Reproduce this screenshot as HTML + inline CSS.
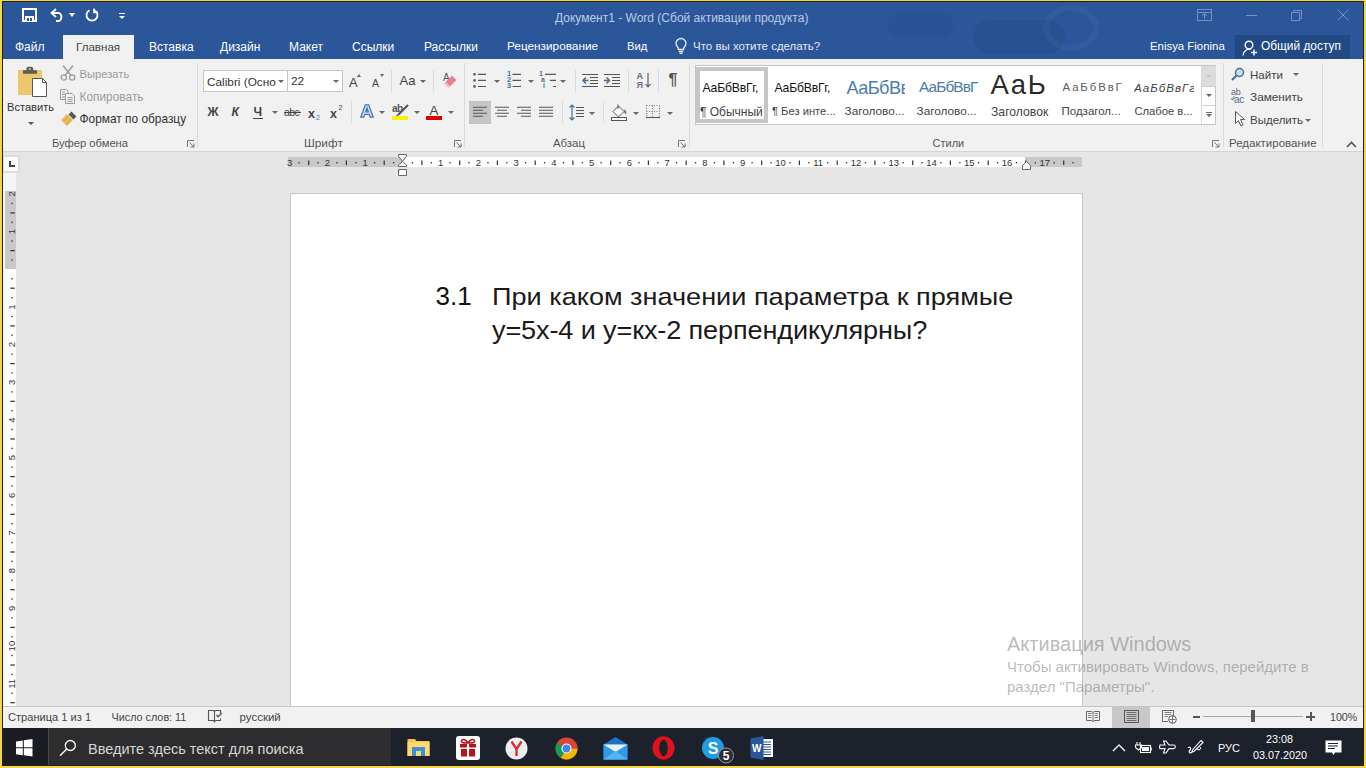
<!DOCTYPE html>
<html><head><meta charset="utf-8">
<style>
*{margin:0;padding:0;box-sizing:border-box}
html,body{width:1366px;height:768px;overflow:hidden;background:#f2d64a;font-family:"Liberation Sans",sans-serif}
.a{position:absolute}
.t{position:absolute;white-space:nowrap;line-height:1;font-size:11.5px;color:#444}
.tab{position:absolute;white-space:nowrap;line-height:1;font-size:12px;color:#fff;top:41px}
.vs{position:absolute;width:1px;background:#dadada}
.dd{position:absolute;width:0;height:0;border-left:3px solid transparent;border-right:3px solid transparent;border-top:3px solid #666}
svg{position:absolute;overflow:visible}
</style></head><body>
<!-- frame -->
<div class="a" style="left:2px;top:1px;width:1362px;height:765px;background:#222"></div>
<!-- title bar -->
<div class="a" style="left:3px;top:2px;width:1360px;height:57px;background:#2b579a;overflow:hidden">
<div class="a" style="left:970px;top:18px;width:92px;height:34px;border-radius:17px;background:rgba(20,45,95,0.13)"></div>
<div class="a" style="left:885px;top:10px;width:66px;height:26px;border-radius:13px;background:rgba(20,45,95,0.07)"></div>
<div class="a" style="left:1040px;top:3px;width:56px;height:46px;border-radius:50%;border:6px solid rgba(255,255,255,0.03)"></div>
</div>
<!-- QAT icons -->
<svg style="left:22px;top:8px" width="15" height="14" viewBox="0 0 15 14"><path d="M1 1H14V13H1Z" fill="none" stroke="#fff" stroke-width="2"/><rect x="3" y="8" width="9" height="5" fill="#fff"/><rect x="5" y="10" width="2" height="3" fill="#2b579a"/><rect x="8" y="10" width="2" height="3" fill="#2b579a"/></svg>
<svg style="left:50px;top:8px" width="15" height="14" viewBox="0 0 15 14"><path d="M2 5H9A4.5 4.5 0 0 1 9 13H6" fill="none" stroke="#fff" stroke-width="1.8"/><path d="M6 1L1.5 5L6 9" fill="none" stroke="#fff" stroke-width="1.8"/></svg>
<div class="dd" style="left:69px;top:13px;border-top-color:#fff;border-width:4px 3.5px 0 3.5px"></div>
<svg style="left:85px;top:8px" width="14" height="14" viewBox="0 0 14 14"><path d="M9.5 2.2A5.5 5.5 0 1 1 4.5 2.2" fill="none" stroke="#fff" stroke-width="1.8"/><path d="M9 0.5V4.5H13" fill="none" stroke="#fff" stroke-width="1.6"/></svg>
<div class="a" style="left:119px;top:13px;width:6px;height:1px;background:#fff"></div>
<div class="dd" style="left:119px;top:16px;border-top-color:#fff;border-width:3px 3px 0 3px"></div>
<div class="t" style="left:555px;top:11.8px;font-size:12px;color:#bdcbe3">Документ1 - Word (Сбой активации продукта)</div>
<!-- window buttons -->
<svg style="left:1197px;top:9px" width="16" height="13" viewBox="0 0 16 13"><rect x="0.5" y="0.5" width="14" height="11" fill="none" stroke="#7593c2"/><path d="M0.5 3.5H14.5M7.5 10V5M5 7L7.5 4.5L10 7" fill="none" stroke="#7593c2"/></svg>
<div class="a" style="left:1246px;top:15px;width:11px;height:1px;background:#7593c2"></div>
<svg style="left:1291px;top:10px" width="11" height="11" viewBox="0 0 11 11"><path d="M0.5 2.5H8.5V10.5H0.5ZM2.5 2.5V0.5H10.5V8.5H8.5" fill="none" stroke="#7593c2"/></svg>
<svg style="left:1337px;top:9px" width="12" height="12" viewBox="0 0 12 12"><path d="M0.5 0.5L11.5 11.5M11.5 0.5L0.5 11.5" stroke="#7593c2" stroke-width="1"/></svg>
<!-- tabs -->
<div class="tab" style="left:15px">Файл</div>
<div class="a" style="left:63px;top:35px;width:71px;height:24px;background:#f1f1f1"></div>
<div class="tab" style="left:76px;color:#444;font-size:11.6px">Главная</div>
<div class="tab" style="left:149px">Вставка</div>
<div class="tab" style="left:220px">Дизайн</div>
<div class="tab" style="left:289px">Макет</div>
<div class="tab" style="left:352px">Ссылки</div>
<div class="tab" style="left:424px">Рассылки</div>
<div class="tab" style="left:507px;font-size:11.8px">Рецензирование</div>
<div class="tab" style="left:627px;font-size:11.2px">Вид</div>
<svg style="left:675px;top:39px" width="12" height="15" viewBox="0 0 12 15"><path d="M3.5 10.5C3.5 8 1 7 1 4.5A5 5 0 0 1 11 4.5C11 7 8.5 8 8.5 10.5Z" fill="none" stroke="#e6ecf5" stroke-width="1.3"/><path d="M3.8 12.5H8.2M4.5 14.3H7.5" stroke="#e6ecf5" stroke-width="1.3"/></svg>
<div class="tab" style="left:693px;font-size:11.5px;color:#e3e9f3">Что вы хотите сделать?</div>
<div class="tab" style="left:1150px;font-size:11.4px">Enisya Fionina</div>
<div class="a" style="left:1235px;top:35px;width:115px;height:24px;background:#214a85"></div>
<svg style="left:1242px;top:40px" width="16" height="16" viewBox="0 0 16 16"><circle cx="7" cy="5" r="3.8" fill="none" stroke="#fff" stroke-width="1.4"/><path d="M1 15.5A6.5 6.5 0 0 1 9 9.3" fill="none" stroke="#fff" stroke-width="1.4"/><path d="M12 9.5V15.5M9 12.5H15" stroke="#fff" stroke-width="1.4"/></svg>
<div class="tab" style="left:1261px;font-size:11.9px">Общий доступ</div>

<!-- ribbon -->
<div class="a" style="left:3px;top:59px;width:1360px;height:92px;background:#f1f1f1"></div>
<div class="a" style="left:3px;top:151px;width:1360px;height:1px;background:#d4d4d4"></div>
<!-- clipboard group -->
<svg style="left:17px;top:66px" width="31" height="32" viewBox="0 0 31 32"><rect x="1" y="4" width="24" height="25" fill="#ecc56f"/><path d="M6 7.8V4.2H9.4V2.5A2 2 0 0 1 11.4 0.8H14.2A2 2 0 0 1 16.2 2.5V4.2H20V7.8Z" fill="#5b5b5b"/><circle cx="12.8" cy="3" r="1.1" fill="#ecc56f"/><path d="M15.5 12.5H25.5L29.5 16.5V30.5H15.5Z" fill="#fff" stroke="#555" stroke-width="1"/><path d="M25.5 12.5V16.5H29.5" fill="none" stroke="#555" stroke-width="1"/></svg>
<div class="t" style="left:7px;top:101.7px;font-size:11.1px;color:#333">Вставить</div>
<div class="dd" style="left:28px;top:121.5px;border-width:3.5px 3px 0 3px;border-top-color:#555"></div>
<svg style="left:60px;top:65px" width="16" height="16" viewBox="0 0 16 16"><path d="M3 0.5L11 10.5M13 0.5L5 10.5" stroke="#9a9a9a" stroke-width="1.4"/><circle cx="3.8" cy="12.5" r="2.6" fill="none" stroke="#9a9a9a" stroke-width="1.3"/><circle cx="12.2" cy="12.5" r="2.6" fill="none" stroke="#9a9a9a" stroke-width="1.3"/></svg>
<div class="t" style="left:79.5px;top:68.8px;font-size:11.2px;color:#9b9b9b">Вырезать</div>
<svg style="left:60px;top:89px" width="16" height="15" viewBox="0 0 16 15"><path d="M0.5 0.5H6.5L8 2V4M0.5 0.5V10.5H5" fill="none" stroke="#9a9a9a"/><path d="M2 3H5M2 5.5H5M2 8H5" stroke="#9a9a9a"/><path d="M5.5 4.5H12L14.5 7V14.5H5.5Z" fill="none" stroke="#9a9a9a"/><path d="M7.5 8.5H12.5M7.5 10.5H12.5M7.5 12.5H12.5" stroke="#9a9a9a"/></svg>
<div class="t" style="left:79.5px;top:91.5px;font-size:11.9px;color:#9b9b9b">Копировать</div>
<svg style="left:60px;top:111px" width="17" height="16" viewBox="0 0 17 16"><path d="M10 2L15 7" stroke="#555" stroke-width="4"/><path d="M1 9L7 3L13 9L7 15Z" fill="#e9bd5a"/><path d="M3 11L9 5" stroke="#d0a040" stroke-width="1"/><path d="M6 14L11 8" stroke="#d0a040" stroke-width="1"/></svg>
<div class="t" style="left:79.5px;top:114.2px;font-size:11.9px;color:#333">Формат по образцу</div>
<div class="t" style="left:52px;top:138.2px;font-size:11.2px;color:#555">Буфер обмена</div>
<svg style="left:187px;top:140px" width="8" height="8" viewBox="0 0 8 8"><path d="M0.5 7V0.5H7" fill="none" stroke="#777"/><path d="M2.5 2.5L7 7M7 3.5V7H3.5" fill="none" stroke="#777"/></svg>
<div class="vs" style="left:197px;top:63px;height:84px"></div>

<!-- font group -->
<div class="a" style="left:203px;top:70px;width:140px;height:22px;background:#fff;border:1px solid #c6c6c6"></div>
<div class="a" style="left:287px;top:71px;width:1px;height:20px;background:#c6c6c6"></div>
<div class="a" style="left:206px;top:71px;width:70px;height:20px;overflow:hidden"><div class="t" style="left:1px;top:5.6px;font-size:11.8px;color:#333">Calibri (Основной текст)</div></div>
<div class="dd" style="left:278px;top:80px;border-width:3px 3px 0 3px"></div>
<div class="t" style="left:291px;top:76.2px;font-size:11.8px;color:#333">22</div>
<div class="dd" style="left:333px;top:80px;border-width:3px 3px 0 3px"></div>
<div class="t" style="left:349px;top:75.6px;font-size:13px;color:#444">A</div>
<div class="a" style="left:357px;top:74px;width:0;height:0;border-left:2.5px solid transparent;border-right:2.5px solid transparent;border-bottom:3px solid #5a6b7d"></div>
<div class="t" style="left:372px;top:77.8px;font-size:10.5px;color:#444">A</div>
<div class="a" style="left:379.5px;top:74px;width:0;height:0;border-left:2.5px solid transparent;border-right:2.5px solid transparent;border-top:3px solid #5a6b7d"></div>
<div class="vs" style="left:391px;top:70px;height:22px"></div>
<div class="t" style="left:399.5px;top:74px;font-size:13px;color:#444">Aa</div>
<div class="dd" style="left:420px;top:80px;border-width:3px 3px 0 3px"></div>
<div class="vs" style="left:433px;top:70px;height:22px"></div>
<div class="t" style="left:443px;top:73.3px;font-size:10px;color:#555">A</div>
<svg style="left:443px;top:74px" width="15" height="15" viewBox="0 0 15 15"><path d="M9 1.5L13.5 6L7 12.5L2.5 8Z" fill="#e8808f"/><path d="M2.5 8L7 12.5L5.5 14L1 9.5Z" fill="#f2b8c0"/></svg>

<div class="t" style="left:207.5px;top:106.3px;font-size:12.2px;font-weight:bold;color:#444">Ж</div>
<div class="t" style="left:231.5px;top:106.3px;font-size:12.2px;font-weight:bold;font-style:italic;color:#444">К</div>
<div class="t" style="left:253.5px;top:106.3px;font-size:12.2px;font-weight:bold;color:#444">Ч</div>
<div class="a" style="left:253px;top:118px;width:10px;height:1px;background:#444"></div>
<div class="dd" style="left:271.5px;top:111px;border-width:3px 3px 0 3px"></div>
<div class="t" style="left:284px;top:106.8px;font-size:10.6px;color:#444;letter-spacing:-0.6px">abc</div>
<div class="a" style="left:284px;top:112px;width:17px;height:1px;background:#444"></div>
<div class="t" style="left:308px;top:107.5px;font-size:12.5px;font-weight:bold;color:#444">x</div>
<div class="t" style="left:316px;top:113.5px;font-size:7px;color:#4f81bd">2</div>
<div class="t" style="left:330px;top:107.5px;font-size:12.5px;font-weight:bold;color:#444">x</div>
<div class="t" style="left:338.5px;top:104px;font-size:7px;color:#444">2</div>
<div class="vs" style="left:351px;top:101px;height:22px"></div>
<svg style="left:360px;top:104px" width="14" height="14" viewBox="0 0 14 14"><path d="M0.8 13.2L5.3 0.8H8.7L13.2 13.2H10.2L9.2 10.3H4.8L3.8 13.2ZM5.7 7.8H8.3L7 4Z" fill="#cfe0f3" stroke="#4a78b0" stroke-width="1.3"/></svg>
<div class="dd" style="left:379px;top:111px;border-width:3px 3px 0 3px"></div>
<div class="t" style="left:392px;top:104px;font-size:10px;font-weight:bold;color:#555;letter-spacing:-0.5px">ab</div>
<svg style="left:395px;top:104px" width="14" height="12" viewBox="0 0 14 12"><path d="M13 1L3 11" stroke="#555" stroke-width="2.2"/><path d="M3 11L1 12" stroke="#555" stroke-width="1"/></svg>
<div class="a" style="left:392px;top:116px;width:16px;height:4px;background:#f5f500"></div>
<div class="dd" style="left:414px;top:111px;border-width:3px 3px 0 3px"></div>
<div class="t" style="left:429.5px;top:103.6px;font-size:13.2px;color:#444">A</div>
<div class="a" style="left:426px;top:116px;width:16px;height:4px;background:#e00000"></div>
<div class="dd" style="left:448px;top:111px;border-width:3px 3px 0 3px"></div>
<div class="t" style="left:304px;top:138.2px;font-size:11.8px;color:#555">Шрифт</div>
<svg style="left:454px;top:140px" width="8" height="8" viewBox="0 0 8 8"><path d="M0.5 7V0.5H7" fill="none" stroke="#777"/><path d="M2.5 2.5L7 7M7 3.5V7H3.5" fill="none" stroke="#777"/></svg>
<div class="vs" style="left:464px;top:63px;height:84px"></div>
<!-- paragraph group -->
<svg style="left:472px;top:72px" width="100" height="17" viewBox="0 0 100 17">
 <g fill="#5a6b7d"><circle cx="2.5" cy="2.3" r="1.4"/><circle cx="2.5" cy="8.4" r="1.4"/><circle cx="2.5" cy="14.5" r="1.4"/></g>
 <path d="M6 2.3H14M6 8.4H14M6 14.5H14" stroke="#555" stroke-width="1.2"/>
 <path d="M40.5 2.3H49M40.5 8.4H49M40.5 14.5H49" stroke="#555" stroke-width="1.2"/>
 <path d="M73 2.3H84M78 8.4H84M81 14.5H84" stroke="#555" stroke-width="1.2"/>
</svg>
<div class="t" style="left:506px;top:71px;font-size:7.5px;font-weight:bold;color:#4e6e8e;line-height:6px;width:6px;text-align:center">1<br>2<br>3</div>
<div class="t" style="left:539px;top:71px;font-size:7px;font-weight:bold;color:#4e6e8e;line-height:6px">1<br>&nbsp;a<br>&nbsp;&nbsp;i</div>
<div class="dd" style="left:494px;top:80px;border-width:3px 3px 0 3px"></div>
<div class="dd" style="left:528px;top:80px;border-width:3px 3px 0 3px"></div>
<div class="dd" style="left:560px;top:80px;border-width:3px 3px 0 3px"></div>
<div class="vs" style="left:575px;top:70px;height:22px"></div>
<svg style="left:581px;top:73px" width="40" height="15" viewBox="0 0 40 15">
 <path d="M1 1.5H17M9 4.5H17M9 7.5H17M9 10.5H17M1 13.5H17" stroke="#555" stroke-width="1.1"/>
 <path d="M7.5 7.5H2M5 4.5L2 7.5L5 10.5" fill="none" stroke="#4e6e8e" stroke-width="1.6"/>
 <path d="M23 1.5H39M31 4.5H39M31 7.5H39M31 10.5H39M23 13.5H39" stroke="#555" stroke-width="1.1"/>
 <path d="M23 7.5H28.5M25.5 4.5L28.5 7.5L25.5 10.5" fill="none" stroke="#4e6e8e" stroke-width="1.6"/>
</svg>
<div class="vs" style="left:628px;top:70px;height:22px"></div>
<div class="t" style="left:636.5px;top:72px;font-size:9px;font-weight:bold;color:#4e6e8e">A</div>
<div class="t" style="left:636.5px;top:80.5px;font-size:9px;font-weight:bold;color:#8e5ea2">Я</div>
<svg style="left:645px;top:73px" width="6" height="15" viewBox="0 0 6 15"><path d="M3 0V14M0.5 11L3 14L5.5 11" fill="none" stroke="#555" stroke-width="1.1"/></svg>
<div class="vs" style="left:658px;top:70px;height:22px"></div>
<div class="t" style="left:668.5px;top:72px;font-size:16px;font-weight:bold;color:#555">¶</div>
<div class="a" style="left:469px;top:101px;width:22px;height:23px;background:#c5c5c5"></div>
<svg style="left:472px;top:106px" width="85" height="12" viewBox="0 0 85 12">
 <path d="M1 1.3H15M1 4.3H11M1 7.3H15M1 10.3H11" stroke="#555" stroke-width="1.1"/>
 <path d="M23 1.3H37M25 4.3H35M23 7.3H37M25 10.3H35" stroke="#555" stroke-width="1.1"/>
 <path d="M45 1.3H59M49 4.3H59M45 7.3H59M49 10.3H59" stroke="#555" stroke-width="1.1"/>
 <path d="M67 1.3H81M67 4.3H81M67 7.3H81M67 10.3H81" stroke="#555" stroke-width="1.1"/>
</svg>
<div class="vs" style="left:562px;top:101px;height:22px"></div>
<svg style="left:569px;top:104px" width="16" height="17" viewBox="0 0 16 17">
 <path d="M3 1V16M0.5 3.5L3 1L5.5 3.5M0.5 13.5L3 16L5.5 13.5" fill="none" stroke="#4e6e8e" stroke-width="1.2"/>
 <path d="M7 3.5H15M7 6.5H15M7 9.5H15M7 12.5H15" stroke="#555" stroke-width="1.1"/>
</svg>
<div class="dd" style="left:589px;top:111.5px;border-width:3px 3px 0 3px"></div>
<div class="vs" style="left:603px;top:101px;height:22px"></div>
<svg style="left:611px;top:104px" width="17" height="17" viewBox="0 0 17 17">
 <path d="M2 7.5L7.5 2L13 7.5L7.5 13Z" fill="#fff" stroke="#555" stroke-width="1"/>
 <path d="M7 0.5V5" stroke="#555" stroke-width="1"/>
 <path d="M13 5.5C15 6.5 16 8 15 10.5L13.5 9Z" fill="#4e6e8e"/>
 <rect x="0.5" y="13.5" width="15" height="3" fill="#fff" stroke="#555" stroke-width="1"/>
</svg>
<div class="dd" style="left:633px;top:111.5px;border-width:3px 3px 0 3px"></div>
<svg style="left:646px;top:105px" width="14" height="13" viewBox="0 0 14 13">
 <path d="M0.5 0.5H13.5M0.5 6.5H13.5M0.5 0.5V12M6.5 0.5V12M13.5 0.5V12" fill="none" stroke="#777" stroke-width="1" stroke-dasharray="1 1.5"/>
 <path d="M0 12.5H14" stroke="#555" stroke-width="1.1"/>
</svg>
<div class="dd" style="left:667px;top:111.5px;border-width:3px 3px 0 3px"></div>
<div class="t" style="left:553px;top:138.2px;font-size:11.4px;color:#555">Абзац</div>
<svg style="left:678px;top:140px" width="8" height="8" viewBox="0 0 8 8"><path d="M0.5 7V0.5H7" fill="none" stroke="#777"/><path d="M2.5 2.5L7 7M7 3.5V7H3.5" fill="none" stroke="#777"/></svg>
<div class="vs" style="left:689px;top:63px;height:84px"></div>
<!-- styles group -->
<div class="a" style="left:695px;top:65px;width:521px;height:60px;background:#fff;border:1px solid #c6c6c6"></div>
<div class="a" style="left:696px;top:67px;width:72px;height:56px;border:4px solid #c6c6c6"></div>
<div class="a" style="left:1201px;top:66px;width:14px;height:58px;border-left:1px solid #dadada"></div>
<div class="a" style="left:1202px;top:66px;width:14px;height:20px;background:#dcdcdc"></div>
<div class="a" style="left:1202px;top:86px;width:14px;height:1px;background:#d0d0d0"></div>
<div class="a" style="left:1202px;top:105px;width:14px;height:1px;background:#d0d0d0"></div>
<div class="a" style="left:1206px;top:74px;width:0;height:0;border-left:3px solid transparent;border-right:3px solid transparent;border-bottom:3px solid #c8c8c8"></div>
<div class="dd" style="left:1206px;top:94px;border-width:3px 3px 0 3px"></div>
<div class="a" style="left:1206px;top:112px;width:6px;height:1px;background:#666"></div>
<div class="dd" style="left:1206px;top:114px;border-width:3px 3px 0 3px"></div>
<div class="t" style="left:702.5px;top:82.4px;font-size:12.2px;color:#111;letter-spacing:-0.2px">АаБбВвГг,</div>
<div class="t" style="left:774.5px;top:82.4px;font-size:12.2px;color:#111;letter-spacing:-0.2px">АаБбВвГг,</div>
<div class="a" style="left:846px;top:72px;width:59px;height:26px;overflow:hidden"><div class="t" style="left:0.5px;top:6.8px;font-size:18.2px;color:#4a7db0;letter-spacing:-0.6px">АаБбВв</div></div>
<div class="a" style="left:918px;top:75px;width:64px;height:22px;overflow:hidden"><div class="t" style="left:1px;top:3.8px;font-size:15.4px;color:#4e7aa6;letter-spacing:-0.9px">АаБбВвГ</div></div>
<div class="t" style="left:990.5px;top:70.5px;font-size:27.5px;color:#2a2a2a;letter-spacing:1.6px">АаЬ</div>
<div class="t" style="left:1062.5px;top:81.9px;font-size:11.4px;color:#5a5a5a;letter-spacing:1.9px">АаБбВвГ</div>
<div class="a" style="left:1134px;top:76px;width:60px;height:20px;overflow:hidden"><div class="t" style="left:0;top:5.9px;font-size:11.6px;font-style:italic;color:#404040;letter-spacing:1px">АаБбВвГг</div></div>
<div class="t" style="left:700px;top:105.9px;font-size:12px;color:#444">¶ Обычный</div>
<div class="t" style="left:772px;top:105.9px;font-size:11.2px;color:#444">¶ Без инте...</div>
<div class="t" style="left:844.5px;top:105.9px;font-size:11.8px;color:#444">Заголово...</div>
<div class="t" style="left:916.5px;top:105.9px;font-size:11.8px;color:#444">Заголово...</div>
<div class="t" style="left:991px;top:105.9px;font-size:12.2px;color:#444">Заголовок</div>
<div class="t" style="left:1061.5px;top:105.9px;font-size:11.5px;color:#444">Подзагол...</div>
<div class="t" style="left:1134.5px;top:105.9px;font-size:11.2px;color:#444">Слабое в...</div>
<div class="t" style="left:932.5px;top:138.2px;font-size:11px;color:#555">Стили</div>
<svg style="left:1212px;top:140px" width="8" height="8" viewBox="0 0 8 8"><path d="M0.5 7V0.5H7" fill="none" stroke="#777"/><path d="M2.5 2.5L7 7M7 3.5V7H3.5" fill="none" stroke="#777"/></svg>
<div class="vs" style="left:1223px;top:63px;height:84px"></div>
<!-- editing group -->
<svg style="left:1231px;top:67px" width="14" height="14" viewBox="0 0 14 14"><circle cx="8.5" cy="5.5" r="4" fill="#bfe0f0" stroke="#4e6e8e" stroke-width="1.5"/><path d="M5.5 8.5L1 13" stroke="#4e6e8e" stroke-width="2.2"/></svg>
<div class="t" style="left:1250px;top:69px;font-size:11.6px;color:#444">Найти</div>
<div class="dd" style="left:1293px;top:73px;border-width:3px 3px 0 3px"></div>
<div class="t" style="left:1231px;top:87.5px;font-size:9px;color:#6b5b7b;letter-spacing:-0.3px">ab</div>
<div class="t" style="left:1234px;top:95px;font-size:10px;color:#4e6e8e;letter-spacing:-0.3px">ac</div>
<svg style="left:1231px;top:96px" width="4" height="6" viewBox="0 0 4 6"><path d="M3 0V3H0.5M2 1.5L0.5 3L2 4.5" fill="none" stroke="#4e6e8e" stroke-width="0.8"/></svg>
<div class="t" style="left:1250px;top:92.4px;font-size:11.8px;color:#444">Заменить</div>
<svg style="left:1235px;top:111px" width="10" height="16" viewBox="0 0 10 16"><path d="M0.5 0.5V12.5L3.5 9.5L6 15L8 14L5.5 8.5H9.5Z" fill="#fff" stroke="#555" stroke-width="1"/></svg>
<div class="t" style="left:1250px;top:114.6px;font-size:11.5px;color:#444">Выделить</div>
<div class="dd" style="left:1305px;top:119px;border-width:3px 3px 0 3px"></div>
<div class="t" style="left:1229px;top:138.2px;font-size:11.5px;color:#555">Редактирование</div>
<div class="vs" style="left:1322px;top:63px;height:84px"></div>
<svg style="left:1346px;top:141px" width="11" height="7" viewBox="0 0 11 7"><path d="M1 6L5.5 1.5L10 6" fill="none" stroke="#555" stroke-width="1.6"/></svg>

<!-- doc area -->
<div class="a" style="left:3px;top:152px;width:1360px;height:554px;background:#e6e6e6"></div>
<!-- tab selector -->
<div class="a" style="left:3px;top:155px;width:17px;height:18px;background:#dcdcdc"></div>
<div class="a" style="left:4px;top:157px;width:14px;height:14px;background:#fdfdfd"></div>
<div class="a" style="left:9px;top:161px;width:2px;height:6px;background:#444"></div>
<div class="a" style="left:9px;top:165px;width:6px;height:2px;background:#444"></div>
<!-- horizontal ruler -->
<div class="a" style="left:288px;top:157px;width:794px;height:10px;background:#c8c8c8"></div>
<div class="a" style="left:403px;top:157px;width:622px;height:10px;background:#fff"></div>
<svg style="left:288px;top:157px" width="794" height="10" viewBox="0 0 794 10"><g fill="#333" font-family="Liberation Sans" font-size="9.5px"><text x="1.7" y="8.8" text-anchor="middle">3</text><rect x="10.5" y="5" width="1.3" height="1.4"/><rect x="20.1" y="3.5" width="1.2" height="4.5"/><rect x="29.4" y="5" width="1.3" height="1.4"/><text x="39.4" y="8.8" text-anchor="middle">2</text><rect x="48.3" y="5" width="1.3" height="1.4"/><rect x="57.8" y="3.5" width="1.2" height="4.5"/><rect x="67.2" y="5" width="1.3" height="1.4"/><text x="77.2" y="8.8" text-anchor="middle">1</text><rect x="86.0" y="5" width="1.3" height="1.4"/><rect x="95.6" y="3.5" width="1.2" height="4.5"/><rect x="104.9" y="5" width="1.3" height="1.4"/><rect x="123.8" y="5" width="1.3" height="1.4"/><rect x="133.3" y="3.5" width="1.2" height="4.5"/><rect x="142.7" y="5" width="1.3" height="1.4"/><text x="152.7" y="8.8" text-anchor="middle">1</text><rect x="161.5" y="5" width="1.3" height="1.4"/><rect x="171.1" y="3.5" width="1.2" height="4.5"/><rect x="180.4" y="5" width="1.3" height="1.4"/><text x="190.4" y="8.8" text-anchor="middle">2</text><rect x="199.3" y="5" width="1.3" height="1.4"/><rect x="208.8" y="3.5" width="1.2" height="4.5"/><rect x="218.2" y="5" width="1.3" height="1.4"/><text x="228.2" y="8.8" text-anchor="middle">3</text><rect x="237.0" y="5" width="1.3" height="1.4"/><rect x="246.6" y="3.5" width="1.2" height="4.5"/><rect x="255.9" y="5" width="1.3" height="1.4"/><text x="266.0" y="8.8" text-anchor="middle">4</text><rect x="274.8" y="5" width="1.3" height="1.4"/><rect x="284.3" y="3.5" width="1.2" height="4.5"/><rect x="293.7" y="5" width="1.3" height="1.4"/><text x="303.7" y="8.8" text-anchor="middle">5</text><rect x="312.5" y="5" width="1.3" height="1.4"/><rect x="322.1" y="3.5" width="1.2" height="4.5"/><rect x="331.4" y="5" width="1.3" height="1.4"/><text x="341.5" y="8.8" text-anchor="middle">6</text><rect x="350.3" y="5" width="1.3" height="1.4"/><rect x="359.8" y="3.5" width="1.2" height="4.5"/><rect x="369.2" y="5" width="1.3" height="1.4"/><text x="379.2" y="8.8" text-anchor="middle">7</text><rect x="388.0" y="5" width="1.3" height="1.4"/><rect x="397.6" y="3.5" width="1.2" height="4.5"/><rect x="406.9" y="5" width="1.3" height="1.4"/><text x="417.0" y="8.8" text-anchor="middle">8</text><rect x="425.8" y="5" width="1.3" height="1.4"/><rect x="435.3" y="3.5" width="1.2" height="4.5"/><rect x="444.7" y="5" width="1.3" height="1.4"/><text x="454.7" y="8.8" text-anchor="middle">9</text><rect x="463.5" y="5" width="1.3" height="1.4"/><rect x="473.1" y="3.5" width="1.2" height="4.5"/><rect x="482.4" y="5" width="1.3" height="1.4"/><text x="492.5" y="8.8" text-anchor="middle">10</text><rect x="501.3" y="5" width="1.3" height="1.4"/><rect x="510.8" y="3.5" width="1.2" height="4.5"/><rect x="520.2" y="5" width="1.3" height="1.4"/><text x="530.2" y="8.8" text-anchor="middle">11</text><rect x="539.0" y="5" width="1.3" height="1.4"/><rect x="548.6" y="3.5" width="1.2" height="4.5"/><rect x="557.9" y="5" width="1.3" height="1.4"/><text x="568.0" y="8.8" text-anchor="middle">12</text><rect x="576.8" y="5" width="1.3" height="1.4"/><rect x="586.3" y="3.5" width="1.2" height="4.5"/><rect x="595.7" y="5" width="1.3" height="1.4"/><text x="605.7" y="8.8" text-anchor="middle">13</text><rect x="614.5" y="5" width="1.3" height="1.4"/><rect x="624.1" y="3.5" width="1.2" height="4.5"/><rect x="633.4" y="5" width="1.3" height="1.4"/><text x="643.5" y="8.8" text-anchor="middle">14</text><rect x="652.3" y="5" width="1.3" height="1.4"/><rect x="661.8" y="3.5" width="1.2" height="4.5"/><rect x="671.2" y="5" width="1.3" height="1.4"/><text x="681.2" y="8.8" text-anchor="middle">15</text><rect x="690.0" y="5" width="1.3" height="1.4"/><rect x="699.6" y="3.5" width="1.2" height="4.5"/><rect x="708.9" y="5" width="1.3" height="1.4"/><text x="719.0" y="8.8" text-anchor="middle">16</text><rect x="727.8" y="5" width="1.3" height="1.4"/><rect x="737.3" y="3.5" width="1.2" height="4.5"/><rect x="746.7" y="5" width="1.3" height="1.4"/><text x="756.7" y="8.8" text-anchor="middle">17</text><rect x="765.5" y="5" width="1.3" height="1.4"/><rect x="775.1" y="3.5" width="1.2" height="4.5"/><rect x="784.4" y="5" width="1.3" height="1.4"/></g></svg>
<svg style="left:398px;top:154px" width="10" height="23" viewBox="0 0 10 23"><path d="M0.5 0.5H8.5V2L4.5 7.5L8.5 11V12.5H0.5V11L4.5 7.5L0.5 2Z" fill="#fff" stroke="#666" stroke-width="1"/><path d="M0.5 15.5H8.5V21.5H0.5Z" fill="#fff" stroke="#666" stroke-width="1"/></svg>
<svg style="left:1022px;top:161px" width="10" height="9" viewBox="0 0 10 9"><path d="M4.5 0.5L8.5 4.5V8.5H0.5V4.5Z" fill="#fff" stroke="#666" stroke-width="1"/></svg>
<!-- vertical ruler -->
<div class="a" style="left:3px;top:173px;width:13px;height:533px;background:#f3f5f8"></div>
<div class="a" style="left:5px;top:191px;width:11px;height:515px;background:#fff"></div>
<div class="a" style="left:5px;top:191px;width:11px;height:78px;background:#c8c8c8"></div>
<svg style="left:5px;top:191px" width="11" height="515" viewBox="0 0 11 515"><g fill="#333" font-family="Liberation Sans" font-size="9.5px"><text transform="translate(6 2.9) rotate(-90)" text-anchor="middle" y="3.6">2</text><rect x="6.3" y="11.8" width="1.4" height="1.3"/><rect x="5.3" y="21.3" width="4.5" height="1.2"/><rect x="6.3" y="30.6" width="1.4" height="1.3"/><text transform="translate(6 40.6) rotate(-90)" text-anchor="middle" y="3.6">1</text><rect x="6.3" y="49.4" width="1.4" height="1.3"/><rect x="5.3" y="59.0" width="4.5" height="1.2"/><rect x="6.3" y="68.3" width="1.4" height="1.3"/><rect x="6.3" y="87.1" width="1.4" height="1.3"/><rect x="5.3" y="96.6" width="4.5" height="1.2"/><rect x="6.3" y="106.0" width="1.4" height="1.3"/><text transform="translate(6 116.0) rotate(-90)" text-anchor="middle" y="3.6">1</text><rect x="6.3" y="124.8" width="1.4" height="1.3"/><rect x="5.3" y="134.3" width="4.5" height="1.2"/><rect x="6.3" y="143.6" width="1.4" height="1.3"/><text transform="translate(6 153.7) rotate(-90)" text-anchor="middle" y="3.6">2</text><rect x="6.3" y="162.5" width="1.4" height="1.3"/><rect x="5.3" y="172.0" width="4.5" height="1.2"/><rect x="6.3" y="181.3" width="1.4" height="1.3"/><text transform="translate(6 191.3) rotate(-90)" text-anchor="middle" y="3.6">3</text><rect x="6.3" y="200.2" width="1.4" height="1.3"/><rect x="5.3" y="209.7" width="4.5" height="1.2"/><rect x="6.3" y="219.0" width="1.4" height="1.3"/><text transform="translate(6 229.0) rotate(-90)" text-anchor="middle" y="3.6">4</text><rect x="6.3" y="237.8" width="1.4" height="1.3"/><rect x="5.3" y="247.4" width="4.5" height="1.2"/><rect x="6.3" y="256.7" width="1.4" height="1.3"/><text transform="translate(6 266.7) rotate(-90)" text-anchor="middle" y="3.6">5</text><rect x="6.3" y="275.5" width="1.4" height="1.3"/><rect x="5.3" y="285.0" width="4.5" height="1.2"/><rect x="6.3" y="294.4" width="1.4" height="1.3"/><text transform="translate(6 304.4) rotate(-90)" text-anchor="middle" y="3.6">6</text><rect x="6.3" y="313.2" width="1.4" height="1.3"/><rect x="5.3" y="322.7" width="4.5" height="1.2"/><rect x="6.3" y="332.0" width="1.4" height="1.3"/><text transform="translate(6 342.1) rotate(-90)" text-anchor="middle" y="3.6">7</text><rect x="6.3" y="350.9" width="1.4" height="1.3"/><rect x="5.3" y="360.4" width="4.5" height="1.2"/><rect x="6.3" y="369.7" width="1.4" height="1.3"/><text transform="translate(6 379.7) rotate(-90)" text-anchor="middle" y="3.6">8</text><rect x="6.3" y="388.6" width="1.4" height="1.3"/><rect x="5.3" y="398.1" width="4.5" height="1.2"/><rect x="6.3" y="407.4" width="1.4" height="1.3"/><text transform="translate(6 417.4) rotate(-90)" text-anchor="middle" y="3.6">9</text><rect x="6.3" y="426.2" width="1.4" height="1.3"/><rect x="5.3" y="435.8" width="4.5" height="1.2"/><rect x="6.3" y="445.1" width="1.4" height="1.3"/><text transform="translate(6 455.1) rotate(-90)" text-anchor="middle" y="3.6">10</text><rect x="6.3" y="463.9" width="1.4" height="1.3"/><rect x="5.3" y="473.4" width="4.5" height="1.2"/><rect x="6.3" y="482.8" width="1.4" height="1.3"/><text transform="translate(6 492.8) rotate(-90)" text-anchor="middle" y="3.6">11</text><rect x="6.3" y="501.6" width="1.4" height="1.3"/><rect x="5.3" y="511.1" width="4.5" height="1.2"/></g></svg>
<!-- page -->
<div class="a" style="left:290px;top:193px;width:793px;height:520px;background:#fff;border:1px solid #c6c6c6"></div>
<div class="t" style="left:435.5px;top:283.2px;font-size:26px;color:#111">3.1</div>
<div class="t" style="left:492px;top:284px;font-size:27.1px;color:#1a1a1a;transform-origin:0 0;transform:scaleY(0.9)">При каком значении параметра к прямые</div>
<div class="t" style="left:492px;top:318.2px;font-size:27.1px;letter-spacing:-0.13px;color:#1a1a1a;transform-origin:0 0;transform:scaleY(0.92)">y=5x-4 и y=кx-2 перпендикулярны?</div>
<!-- activation watermark -->
<div class="t" style="left:1007px;top:634px;font-size:20px;color:rgba(100,100,100,0.45)">Активация Windows</div>
<div class="t" style="left:1007px;top:658.5px;font-size:15px;color:rgba(100,100,100,0.45)">Чтобы активировать Windows, перейдите в</div>
<div class="t" style="left:1007px;top:678.5px;font-size:15px;color:rgba(100,100,100,0.45)">раздел "Параметры".</div>


<!-- status -->
<div class="a" style="left:3px;top:706px;width:1360px;height:22px;background:#f1f1f1;border-top:1px solid #c6c6c6"></div>
<div class="t" style="left:8px;top:712.4px;font-size:11.1px;color:#444">Страница 1 из 1</div>
<div class="t" style="left:111.5px;top:712.4px;font-size:10.8px;color:#444">Число слов: 11</div>
<svg style="left:208px;top:710px" width="15" height="14" viewBox="0 0 15 14"><path d="M12.5 3V0.5H7.5L6.5 1.5L5.5 0.5H0.5V10.5H5.5L6.5 11.5L7.5 10.5H12.5V8.5" fill="none" stroke="#555" stroke-width="1.1"/><path d="M6.5 1.5V12.5" stroke="#555" stroke-width="1.1"/><path d="M8.5 5L10.2 6.8L13.8 3" fill="none" stroke="#555" stroke-width="1.4"/></svg>
<div class="t" style="left:239.5px;top:712.4px;font-size:11.5px;color:#444">русский</div>
<svg style="left:1086px;top:710px" width="14" height="13" viewBox="0 0 14 13"><path d="M0.5 1.5H5.5L7 2.5L8.5 1.5H13.5V10.5H8.5L7 11.5L5.5 10.5H0.5Z" fill="none" stroke="#666"/><path d="M7 2.5V11.5M2 3.5H5.5M2 5.5H5.5M2 7.5H5.5M8.5 3.5H12M8.5 5.5H12M8.5 7.5H12" stroke="#666" stroke-width="0.8"/></svg>
<div class="a" style="left:1112px;top:707px;width:38px;height:21px;background:#c8c8c8"></div>
<svg style="left:1124px;top:710px" width="15" height="13" viewBox="0 0 15 13"><path d="M0.5 0.5H14.5V12.5H0.5Z" fill="none" stroke="#555"/><path d="M2.5 2.5H12.5M2.5 4.5H12.5M2.5 6.5H12.5M2.5 8.5H12.5M2.5 10.5H12.5" stroke="#555" stroke-width="0.8"/></svg>
<svg style="left:1162px;top:710px" width="15" height="14" viewBox="0 0 15 14"><path d="M0.5 0.5H11.5V6M0.5 0.5V11.5H6" fill="none" stroke="#666"/><path d="M2.5 2.5H9.5M2.5 4.5H9.5M2.5 6.5H6" stroke="#666" stroke-width="0.8"/><circle cx="10.5" cy="9.5" r="3.8" fill="#fff" stroke="#555"/><path d="M7.5 9.5H13.5M10.5 6V13" stroke="#555" stroke-width="0.8"/></svg>
<div class="a" style="left:1193px;top:716px;width:7px;height:2px;background:#555"></div>
<div class="a" style="left:1203px;top:716px;width:100px;height:1px;background:#a8a8a8"></div>
<div class="a" style="left:1251px;top:710px;width:4px;height:12px;background:#555"></div>
<div class="a" style="left:1306px;top:716px;width:9px;height:2px;background:#555"></div>
<div class="a" style="left:1309.5px;top:712px;width:2px;height:9px;background:#555"></div>
<div class="t" style="left:1330px;top:712.4px;font-size:10.6px;color:#444">100%</div>


<!-- taskbar -->
<div class="a" style="left:3px;top:728px;width:1358px;height:37px;background:#1d212b"></div>
<div class="a" style="left:3px;top:728px;width:45px;height:37px;background:#1b1c22"></div>
<svg style="left:16px;top:739px" width="17" height="18" viewBox="0 0 17 18"><path d="M0 2.5L6.8 1.5V8.3H0ZM7.8 1.3L16.5 0V8.3H7.8ZM0 9.3H6.8V16.2L0 15.2ZM7.8 9.3H16.5V17.5L7.8 16.3Z" fill="#fff"/></svg>
<div class="a" style="left:48px;top:728px;width:343px;height:37px;background:#2d2d2f;border-left:1px solid #4a4a4a"></div>
<svg style="left:59px;top:739px" width="18" height="18" viewBox="0 0 18 18"><circle cx="11.3" cy="6.5" r="5" fill="none" stroke="#fff" stroke-width="1.3"/><path d="M7.7 10L1 16.8" stroke="#fff" stroke-width="1.3"/></svg>
<div class="t" style="left:88px;top:742.2px;font-size:14.5px;color:#d6d6d6">Введите здесь текст для поиска</div>
<!-- explorer -->
<svg style="left:407px;top:738px" width="23" height="19" viewBox="0 0 23 19"><path d="M0.5 1H8L9.5 3H22.5V18H0.5Z" fill="#f3c54f"/><path d="M0.5 4H22.5V18H0.5Z" fill="#fdd971"/><path d="M5 9H18V18H14V13H9V18H5Z" fill="#3d8fd6"/></svg>
<!-- gift -->
<div class="a" style="left:456px;top:736px;width:24px;height:24px;background:#fff;border-radius:3px"></div>
<svg style="left:456px;top:736px" width="24" height="24" viewBox="0 0 24 24"><path d="M12 7C9 2 5 3 5.5 5.5C6 7.5 10 7 12 7C14 7 18 7.5 18.5 5.5C19 3 15 2 12 7" fill="none" stroke="#b3141e" stroke-width="1.6"/><rect x="4" y="8" width="7" height="3.5" fill="#b3141e"/><rect x="13" y="8" width="7" height="3.5" fill="#b3141e"/><rect x="5" y="13" width="6" height="7.5" fill="#b3141e"/><rect x="13" y="13" width="6" height="7.5" fill="#b3141e"/></svg>
<!-- yandex -->
<svg style="left:505px;top:736.5px" width="23" height="23" viewBox="0 0 23 23"><circle cx="11.5" cy="11.5" r="11" fill="#eeeeee"/><path d="M6.5 4.5L11.5 12V19M16.5 4.5L11.5 12" fill="none" stroke="#e2262b" stroke-width="2.3"/></svg>
<!-- chrome -->
<svg style="left:554.5px;top:736.5px" width="23" height="23" viewBox="0 0 23 23"><circle cx="11.5" cy="11.5" r="11" fill="#db4437"/><path d="M11.5 11.5L1.97 6A11 11 0 0 0 6 21.03Z" fill="#0f9d58"/><path d="M11.5 11.5L6 21.03A11 11 0 0 0 22.5 11.5Z" fill="#f4b400"/><path d="M11.5 11.5H22.5A11 11 0 0 0 21.03 6H11.5Z" fill="#db4437"/><circle cx="11.5" cy="11.5" r="5" fill="#fff"/><circle cx="11.5" cy="11.5" r="3.9" fill="#4285f4"/></svg>
<!-- mail -->
<svg style="left:602.5px;top:736.5px" width="25" height="23" viewBox="0 0 25 23"><path d="M0.5 7.5L12.5 0L24.5 7.5V22.5H0.5Z" fill="#1a73c7"/><path d="M0.5 7.5H24.5V22.5H0.5Z" fill="#2f9ae8"/><path d="M0.5 7.5L12.5 15L24.5 7.5Z" fill="#e8f4fc"/><path d="M0.5 22.5L12.5 14L24.5 22.5Z" fill="#53b4f2"/></svg>
<!-- opera -->
<svg style="left:652px;top:736px" width="23" height="24" viewBox="0 0 23 24"><ellipse cx="11.5" cy="12" rx="11" ry="11.7" fill="#e0121c"/><ellipse cx="11.5" cy="12" rx="4.3" ry="8.3" fill="#1d212b"/></svg>
<!-- skype -->
<svg style="left:701px;top:736px" width="34" height="30" viewBox="0 0 34 30"><circle cx="12" cy="12" r="11" fill="#1e9ddf"/><path d="M1.5 8A6 6 0 0 1 8 1.5L3 3Z M22.5 16A6 6 0 0 1 16 22.5L21 21Z" fill="#1e9ddf"/><text x="12" y="17.5" text-anchor="middle" font-family="Liberation Sans" font-weight="bold" font-size="16" fill="#fff">S</text><circle cx="25" cy="19.5" r="7.5" fill="#2a2c33" stroke="#9a9a9a" stroke-width="1"/><text x="25" y="24" text-anchor="middle" font-family="Liberation Sans" font-weight="bold" font-size="12" fill="#fff">5</text></svg>
<!-- word -->
<svg style="left:750px;top:736px" width="24" height="24" viewBox="0 0 24 24"><rect x="10" y="3" width="13" height="18" fill="#fff"/><path d="M13 6H21M13 8.5H21M13 11H21M13 13.5H21M13 16H21M13 18.5H21" stroke="#2b579a" stroke-width="1"/><path d="M0.5 2.5L13.5 0V24L0.5 21.5Z" fill="#2b579a"/><text x="6.8" y="16" text-anchor="middle" font-family="Liberation Sans" font-weight="bold" font-size="10" fill="#fff">W</text></svg>
<!-- tray -->
<svg style="left:1112px;top:744px" width="14" height="8" viewBox="0 0 14 8"><path d="M1 7L7 1L13 7" fill="none" stroke="#fff" stroke-width="1.3"/></svg>
<svg style="left:1134px;top:742px" width="18" height="12" viewBox="0 0 18 12"><path d="M3 0V3M6 0V3M1.5 3H7.5V5.5L4.5 8L1.5 5.5Z" fill="none" stroke="#fff" stroke-width="1.1"/><rect x="6.5" y="3.5" width="10" height="7" fill="none" stroke="#fff" stroke-width="1.1"/><rect x="8" y="5" width="7" height="4" fill="#fff"/><rect x="16.5" y="5.5" width="1.3" height="3" fill="#fff"/></svg>
<svg style="left:1159px;top:740px" width="17" height="14" viewBox="0 0 17 14"><path d="M1 5H6L4.5 1H7L10 5H14.5A1.8 1.8 0 0 1 14.5 8.6H10L7 13H4.5L6 8.6H1L0.5 7Z" fill="none" stroke="#fff" stroke-width="1.1"/></svg>
<svg style="left:1187px;top:739px" width="17" height="17" viewBox="0 0 17 17"><path d="M14 1.5L16 3.5L7 12.5L5 13L5.5 11Z" fill="none" stroke="#fff" stroke-width="1.1"/><path d="M5 13C3 15 1 13 3 11C5 9 2 7 1 9" fill="none" stroke="#fff" stroke-width="1.1"/><path d="M10 10C12 12 15 10 13 8" fill="none" stroke="#fff" stroke-width="1"/></svg>
<div class="t" style="left:1218px;top:742.7px;font-size:11px;color:#fff">РУС</div>
<div class="t" style="left:1266px;top:733.6px;font-size:10.8px;color:#fff">23:08</div>
<div class="t" style="left:1253px;top:750.1px;font-size:10.8px;color:#fff">03.07.2020</div>
<svg style="left:1325px;top:740px" width="17" height="17" viewBox="0 0 17 17"><path d="M0.5 0.5H16.5V12.5H10L8.5 15L7 12.5H0.5Z" fill="#fff"/><path d="M3 3.5H13M3 6H13M3 8.5H10" stroke="#1d212b" stroke-width="1.1"/></svg>

</body></html>
